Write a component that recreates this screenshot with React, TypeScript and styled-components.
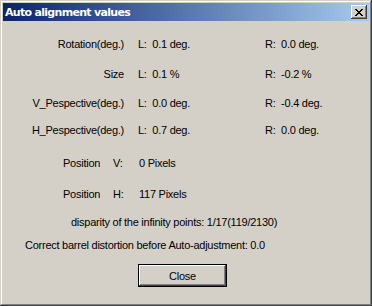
import styled, { createGlobalStyle } from 'styled-components';

const GlobalStyle = createGlobalStyle`
  html, body {
    margin: 0;
    padding: 0;
    background: #d4d0c8;
  }
`;

const face = '#d4d0c8';
const shadow = '#808080';
const darkShadow = '#404040';
const highlight = '#ffffff';
const uiFont = `"Liberation Sans", Arial, sans-serif`;

const Window = styled.div`
  box-sizing: border-box;
  width: 372px;
  height: 306px;
  padding: 3px;
  background: ${face};
  box-shadow:
    inset -1px -1px ${darkShadow},
    inset 1px 1px ${face},
    inset -2px -2px ${shadow},
    inset 2px 2px ${highlight};
  font-family: ${uiFont};
  font-size: 11px;
  letter-spacing: -0.25px;
  color: #000;
  display: flex;
  flex-direction: column;
`;

const TitleBar = styled.div`
  height: 18px;
  display: flex;
  align-items: center;
  justify-content: space-between;
  padding: 0 2px 0 2px;
  background: linear-gradient(to right, #0a246a, #a6caf0);
`;

const Title = styled.span`
  color: #fff;
  font-family: "DejaVu Sans", Tahoma, sans-serif;
  font-weight: bold;
  font-size: 11px;
  letter-spacing: -0.7px;
`;

const TitleButton = styled.button`
  box-sizing: border-box;
  width: 16px;
  height: 14px;
  padding: 0;
  border: none;
  background: ${face};
  box-shadow:
    inset -1px -1px ${darkShadow},
    inset 1px 1px ${highlight},
    inset -2px -2px ${shadow},
    inset 2px 2px ${face};
  display: flex;
  align-items: center;
  justify-content: center;
`;

const Body = styled.div`
  display: flex;
  flex-direction: column;
  padding-top: 17px;
`;

const ValueRow = styled.div<{ $space: number }>`
  display: grid;
  grid-template-columns: 121px 113px auto;
  column-gap: 14px;
  line-height: 13px;
  margin-top: ${(p) => p.$space}px;
  white-space: pre;
`;

const Label = styled.span`
  text-align: right;
`;

const PositionRow = styled.div<{ $space: number }>`
  display: grid;
  grid-template-columns: 50px 26px auto;
  padding-left: 60px;
  line-height: 13px;
  margin-top: ${(p) => p.$space}px;
`;

const Line = styled.div<{ $space: number; $indent: number }>`
  line-height: 13px;
  margin-top: ${(p) => p.$space}px;
  padding-left: ${(p) => p.$indent}px;
`;

const CloseButton = styled.button`
  box-sizing: border-box;
  width: 89px;
  height: 23px;
  margin: 12px 0 0 135px;
  padding: 0;
  border: 1px solid #000;
  background: ${face};
  box-shadow:
    inset -1px -1px ${darkShadow},
    inset 1px 1px ${highlight},
    inset -2px -2px ${shadow};
  font-family: ${uiFont};
  font-size: 11px;
  letter-spacing: -0.25px;
  color: #000;
`;

const values = [
  { label: 'Rotation(deg.)', l: '0.1 deg.', r: '0.0 deg.', space: 0 },
  { label: 'Size', l: '0.1 %', r: '-0.2 %', space: 17 },
  { label: 'V_Pespective(deg.)', l: '0.0 deg.', r: '-0.4 deg.', space: 16 },
  { label: 'H_Pespective(deg.)', l: '0.7 deg.', r: '0.0 deg.', space: 14 },
];

const positions = [
  { axis: 'V:', value: '0 Pixels', space: 20 },
  { axis: 'H:', value: '117 Pixels', space: 18 },
];

const App = () => {
  return (
    <>
      <GlobalStyle />
      <Window>
        <TitleBar>
          <Title>Auto alignment values</Title>
          <TitleButton aria-label="Close">
            <svg width="8" height="7" viewBox="0 0 8 7">
              <path
                d="M0 0h2v1h1v1h2V1h1V0h2v1H7v1H6v1H5v1h1v1h1v1h1v1H6V6H5V5H3v1H2v1H0V6h1V5h1V4h1V3H2V2H1V1H0z"
                fill="#000"
              />
            </svg>
          </TitleButton>
        </TitleBar>
        <Body>
          {values.map((v) => (
            <ValueRow key={v.label} $space={v.space}>
              <Label>{v.label}</Label>
              <span>{`L:  ${v.l}`}</span>
              <span>{`R:  ${v.r}`}</span>
            </ValueRow>
          ))}
          {positions.map((p) => (
            <PositionRow key={p.axis} $space={p.space}>
              <span>Position</span>
              <span>{p.axis}</span>
              <span>{p.value}</span>
            </PositionRow>
          ))}
          <Line $space={15} $indent={68}>
            disparity of the infinity points: 1/17(119/2130)
          </Line>
          <Line $space={10} $indent={22}>
            Correct barrel distortion before Auto-adjustment: 0.0
          </Line>
          <div>
            <CloseButton>Close</CloseButton>
          </div>
        </Body>
      </Window>
    </>
  );
};

export default App;
